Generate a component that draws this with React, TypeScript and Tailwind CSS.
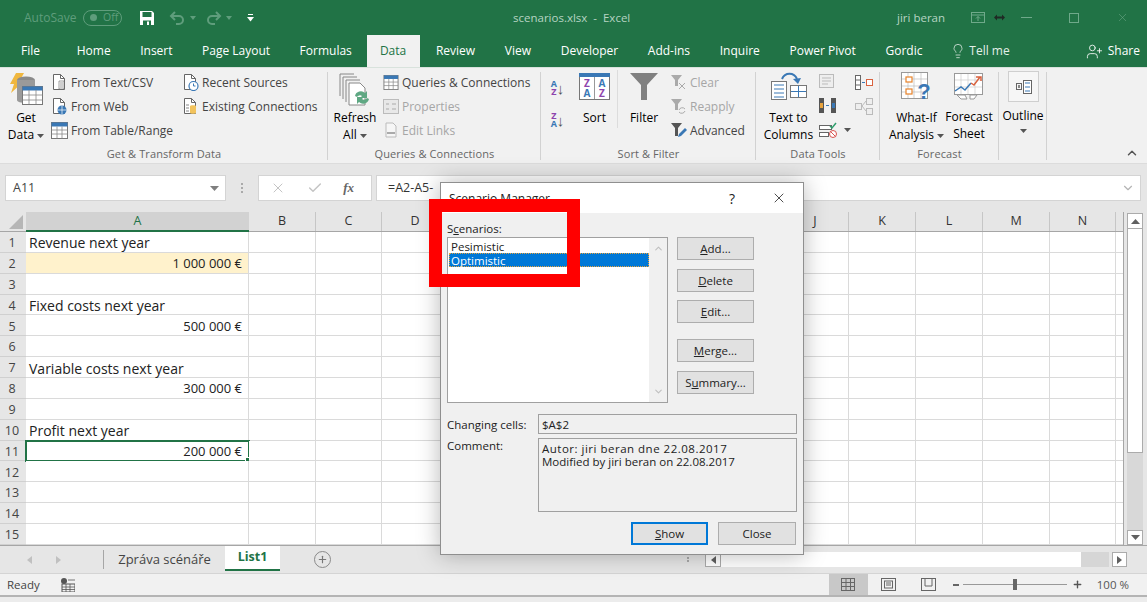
import { ReactNode } from "react";
import { Check, ChevronDown, ChevronUp, Lightbulb, Plus, UserPlus, X } from "lucide-react";

const columns = [
  { name: "A", width: 223 },
  { name: "B", width: 67 },
  { name: "C", width: 66 },
  { name: "D", width: 67 },
  { name: "E", width: 67 },
  { name: "F", width: 66 },
  { name: "G", width: 67 },
  { name: "H", width: 67 },
  { name: "I", width: 66 },
  { name: "J", width: 67 },
  { name: "K", width: 67 },
  { name: "L", width: 67 },
  { name: "M", width: 67 },
  { name: "N", width: 66 },
];

const rows: { label: string; text?: string; value?: string; fill?: boolean }[] = [
  { label: "1", text: "Revenue next year" },
  { label: "2", value: "1 000 000 €", fill: true },
  { label: "3" },
  { label: "4", text: "Fixed costs next year" },
  { label: "5", value: "500 000 €" },
  { label: "6" },
  { label: "7", text: "Variable costs next year" },
  { label: "8", value: "300 000 €" },
  { label: "9" },
  { label: "10", text: "Profit next year" },
  { label: "11", value: "200 000 €" },
  { label: "12" },
  { label: "13" },
  { label: "14" },
  { label: "15" },
];

function Caret({ className = "" }: { className?: string }) {
  return (
    <svg width="7" height="4" viewBox="0 0 7 4" className={`inline-block align-middle ${className}`}>
      <path d="M0 0h7L3.500 4z" fill="#555" />
    </svg>
  );
}

function DocIcon({ children }: { children?: ReactNode }) {
  return (
    <svg width="17" height="18" viewBox="0 0 17 18" className="shrink-0">
      <path d="M2.500 1.500h7l4 4v11h-11z" fill="#fff" stroke="#666" />
      <path d="M9.500 1.500v4h4" fill="none" stroke="#666" />
      {children}
    </svg>
  );
}

function TableIcon({ w = 17, h = 17 }: { w?: number; h?: number }) {
  return (
    <svg width={w} height={h} viewBox="0 0 17 17" className="shrink-0">
      <rect x="0.500" y="0.500" width="16" height="16" fill="#fff" stroke="#777" />
      <rect x="0.500" y="0.500" width="16" height="4" fill="#3a78b5" />
      <path d="M.5 8h16M.5 12h16M6 4.500v12M11 4.500v12" stroke="#888" strokeWidth="0.800" />
    </svg>
  );
}

function SmallRow({ icon, label, muted }: { icon: ReactNode; label: string; muted?: boolean }) {
  return (
    <div className={`flex h-6 items-center gap-[3px] whitespace-nowrap ${muted ? "text-[#a6a6a6]" : "text-[#444]"}`}>
      {icon}
      <span>{label}</span>
    </div>
  );
}

function RibbonGroup({ width, label, children }: { width: number; label: string; children: ReactNode }) {
  return (
    <div className="relative flex h-full shrink-0 flex-col" style={{ width }}>
      <div className="flex h-[77px] min-h-0 pt-[2px]">{children}</div>
      <div className="flex flex-1 items-start justify-center text-[11px] tracking-[0.1px] text-[#666]">{label}</div>
      <div className="absolute right-0 top-[4px] h-[88px] w-px bg-[#d2d2d2]" />
    </div>
  );
}

function DialogButton({ children, className = "" }: { children: ReactNode; className?: string }) {
  return (
    <div className={`flex h-[23px] w-[77px] items-center justify-center border-[1.5px] bg-[#e1e1e1] text-[11.5px] text-[#222] ${className || "border-[#adadad]"}`}>
      {children}
    </div>
  );
}

function TitleBar() {
  return (
    <div className="flex h-[35px] items-center bg-[#217346] pl-[24px] text-[11.5px]">
      <span className="w-[52px] whitespace-nowrap text-[12px] text-[#5f9d7c]">AutoSave</span>
      <div className="ml-[7px] flex h-[16px] w-[39px] items-center rounded-full border border-[#5f9d7c] pl-[6px]">
        <div className="h-[7px] w-[7px] rounded-full bg-[#5f9d7c]" />
        <span className="ml-[6px] text-[10.5px] text-[#5f9d7c]">Off</span>
      </div>
      <svg width="16" height="16" viewBox="0 0 16 16" className="ml-[17px]">
        <path d="M1 1h12l2 2v12H1z" fill="#fff" />
        <rect x="3.500" y="2" width="9" height="5" fill="#217346" />
        <rect x="4" y="10.500" width="8" height="4.500" fill="#217346" />
        <rect x="8" y="11.500" width="2" height="3.500" fill="#fff" />
      </svg>
      <svg width="16" height="14" viewBox="0 0 16 14" fill="none" stroke="#5f9d7c" strokeWidth="2" className="ml-[14px]">
        <path d="M6 1 2 5l4 4" />
        <path d="M2 5h8a4 4 0 0 1 0 8H7" />
      </svg>
      <svg width="6" height="4" viewBox="0 0 6 4" className="ml-[5px]"><path d="M0 0h6L3 4z" fill="#5f9d7c" /></svg>
      <svg width="16" height="14" viewBox="0 0 16 14" fill="none" stroke="#5f9d7c" strokeWidth="2" className="ml-[10px]">
        <path d="m10 1 4 4-4 4" />
        <path d="M14 5H6a4 4 0 0 0 0 8h3" />
      </svg>
      <svg width="6" height="4" viewBox="0 0 6 4" className="ml-[4px]"><path d="M0 0h6L3 4z" fill="#5f9d7c" /></svg>
      <svg width="7" height="8" viewBox="0 0 7 8" className="ml-[15px]">
        <path d="M1 .5h5" stroke="#fff" />
        <path d="M0 3h7L3.500 7.500z" fill="#fff" />
      </svg>
      <span className="ml-[259px] w-[384px] whitespace-nowrap text-[#b6d3c3]">scenarios.xlsx&nbsp; -&nbsp; Excel</span>
      <span className="w-[48px] whitespace-nowrap text-[#b6d3c3]">jiri beran</span>
      <svg width="14" height="11" viewBox="0 0 14 11" fill="none" stroke="#6fa98a" className="ml-[26px]">
        <rect x=".5" y=".5" width="13" height="10" />
        <path d="M.5 3h13M7 9V4.500M5 6.500l2-2 2 2" />
      </svg>
      <svg width="11" height="7" viewBox="0 0 11 7" className="ml-[9px]">
        <path d="M0 3.500 3 .5v2h5v-2l3 3-3 3v-2H3v2z" fill="#1f2a24" />
      </svg>
      <div className="ml-[16px] h-px w-[11px] bg-[#6fa98a]" />
      <div className="ml-[37px] h-[10px] w-[10px] border border-[#6fa98a]" />
      <X size={13} strokeWidth={1} className="ml-[37px] text-[#6fa98a]" />
    </div>
  );
}

function TabBar() {
  const tabs = ["Review", "View", "Developer", "Add-ins", "Inquire", "Power Pivot", "Gordic"];
  return (
    <div className="flex h-[32px] items-stretch bg-[#217346] text-[12px] text-white">
      <div className="flex items-center pl-[21px] pr-[22px]">File</div>
      {["Home", "Insert", "Page Layout", "Formulas"].map((tab) => (
        <div key={tab} className="flex items-center px-[14.75px]">{tab}</div>
      ))}
      <div className="mr-[1.5px] flex w-[53px] items-center justify-center bg-[#f1f1f1] text-[#217346]">Data</div>
      {tabs.map((tab) => (
        <div key={tab} className="flex items-center px-[14.85px]">{tab}</div>
      ))}
      <div className="ml-[13px] flex items-center gap-[3px]">
        <Lightbulb size={16} strokeWidth={1} />
        <span className="text-[#e3efe8]">Tell me</span>
      </div>
      <div className="ml-auto flex items-center gap-[5px] pr-[7px]">
        <UserPlus size={17} strokeWidth={1.2} />
        <span>Share</span>
      </div>
    </div>
  );
}

function Ribbon() {
  return (
    <div className="flex h-[96px] border-t border-[#d8e2dc] bg-[#f1f1f1] text-[12px] leading-[17px]">
      <RibbonGroup width={328} label="Get & Transform Data">
        <div className="flex w-[50px] flex-col items-center pl-[2px]">
          <svg width="36" height="36" viewBox="0 0 36 36" className="mt-[2px]">
            <path d="M8 1h8l-5 9h4L3 21l3-9H2z" fill="#f0b73f" />
            <ellipse cx="18" cy="8" rx="9" ry="3.500" fill="#8a8a8a" />
            <path d="M9 8v20c0 2 4 3 9 3V8z" fill="#9a9a9a" />
            <path d="M27 8v8H18V8z" fill="#9a9a9a" />
            <rect x="14.500" y="14.500" width="20" height="18" fill="#fff" stroke="#777" />
            <rect x="14.500" y="14.500" width="20" height="4" fill="#3a78b5" />
            <path d="M14.500 23h20M14.500 28h20M21 18v14M28 18v14" stroke="#888" strokeWidth=".8" />
          </svg>
          <div className="mt-[1px] text-center">Get</div>
          <div className="whitespace-nowrap text-center">Data <Caret /></div>
        </div>
        <div className="ml-[1px] w-[131px] text-[#444]">
          <SmallRow label="From Text/CSV" icon={<DocIcon><path d="M8 8h5v8H8zM9 10h3M9 12h3M9 14h3" fill="#fff" stroke="#777" strokeWidth=".7" /></DocIcon>} />
          <SmallRow label="From Web" icon={<DocIcon><circle cx="11" cy="13" r="4.500" fill="#3a78b5" /><path d="M6.500 13h9M11 8.500v9" stroke="#fff" strokeWidth=".7" /></DocIcon>} />
          <SmallRow label="From Table/Range" icon={<TableIcon />} />
        </div>
        <div className="text-[#444]">
          <SmallRow label="Recent Sources" icon={<DocIcon><circle cx="11.500" cy="13" r="4.500" fill="#fff" stroke="#3a78b5" strokeWidth="1.200" /><path d="M11.500 10.500V13h2" fill="none" stroke="#3a78b5" /></DocIcon>} />
          <SmallRow label="Existing Connections" icon={<DocIcon><path d="M8 9c0-1 6-1 6 0v7c0 1-6 1-6 0z" fill="#f2c35d" /><path d="M4 8h3M4 11h3M4 14h3" stroke="#888" /></DocIcon>} />
        </div>
      </RibbonGroup>
      <RibbonGroup width={213} label="Queries & Connections">
        <div className="flex w-[54px] flex-col items-center">
          <svg width="34" height="36" viewBox="0 0 34 36" className="mt-[2px]">
            <path d="M2 2h14M2 2v22M5 5h14M5 5v22M8 8h14M8 8v22" stroke="#888" fill="none" />
            <path d="M11 11h11l5 5v17H11z" fill="#fff" stroke="#888" />
            <path d="M17 24a6 6 0 0 1 10-3l2-2v7h-7l2-2a3.500 3.500 0 0 0-5 1zM31 27a6 6 0 0 1-10 3l-2 2v-7h7l-2 2a3.500 3.500 0 0 0 5-1z" fill="#5fa883" />
          </svg>
          <div className="mt-[1px]">Refresh</div>
          <div className="whitespace-nowrap">All <Caret /></div>
        </div>
        <div className="ml-[1px]">
          <SmallRow label="Queries & Connections" icon={<TableIcon w={16} h={15} />} />
          <SmallRow muted label="Properties" icon={<svg width="16" height="15" viewBox="0 0 16 15"><rect x=".5" y=".5" width="15" height="14" fill="#e8e8e8" stroke="#bbb" /><path d="M3 5h3M9 5h4M3 10h3M9 10h4" stroke="#aaa" /></svg>} />
          <SmallRow muted label="Edit Links" icon={<svg width="16" height="16" viewBox="0 0 16 16"><path d="M3 1h7l3 3v11H3z" fill="#f6f6f6" stroke="#bbb" /><path d="M4 11h8" stroke="#aaa" strokeWidth="2" /></svg>} />
        </div>
      </RibbonGroup>
      <RibbonGroup width={215} label="Sort & Filter">
        <div className="flex w-[28px] flex-col items-center gap-[6px] pl-[5px] pt-[10px] text-[9px] font-bold leading-[8px]">
          <div className="flex items-center"><div className="text-center"><div className="text-[#3a78b5]">A</div><div className="text-[#8e44ad]">Z</div></div><span className="text-[15px] font-normal text-[#555]">↓</span></div>
          <div className="mt-[10px] flex items-center"><div className="text-center"><div className="text-[#8e44ad]">Z</div><div className="text-[#3a78b5]">A</div></div><span className="text-[15px] font-normal text-[#555]">↓</span></div>
        </div>
        <div className="flex w-[48px] flex-col items-center pl-[3px]">
          <svg width="31" height="27" viewBox="0 0 31 27" className="mt-[3px]">
            <rect x=".5" y=".5" width="30" height="26" fill="#fff" stroke="#777" />
            <rect x="0" y="0" width="31" height="4" fill="#3a78b5" />
            <path d="M15.500 4v22" stroke="#999" />
            <text x="8" y="14" fontSize="10" fontWeight="700" textAnchor="middle" fill="#8e44ad">Z</text>
            <text x="8" y="24" fontSize="10" fontWeight="700" textAnchor="middle" fill="#3a78b5">A</text>
            <text x="23" y="14" fontSize="10" fontWeight="700" textAnchor="middle" fill="#3a78b5">A</text>
            <text x="23" y="24" fontSize="10" fontWeight="700" textAnchor="middle" fill="#8e44ad">Z</text>
          </svg>
          <div className="mt-[9px]">Sort</div>
        </div>
        <div className="flex h-[58px] w-[53px] flex-col items-center self-start border-l border-[#dcdcdc]">
          <svg width="30" height="29" viewBox="0 0 30 29" className="mt-[2px]">
            <path d="M1 1h28L18 13v15h-6V13z" fill="#808080" />
          </svg>
          <div className="mt-[8px]">Filter</div>
        </div>
        <div>
          <SmallRow muted label="Clear" icon={<svg width="17" height="17" viewBox="0 0 17 17"><path d="M1 1h11L8 6v6H5V6z" fill="#aaa" /><path d="m9 9 6 6m0-6-6 6" stroke="#aaa" /></svg>} />
          <SmallRow muted label="Reapply" icon={<svg width="17" height="17" viewBox="0 0 17 17"><path d="M1 1h11L8 6v6H5V6z" fill="#aaa" /><path d="M9 12a3.500 3.500 0 0 1 6-1m0 2a3.500 3.500 0 0 1-6 1" fill="none" stroke="#aaa" /></svg>} />
          <SmallRow label="Advanced" icon={<svg width="17" height="17" viewBox="0 0 17 17"><path d="M1 1h11L8 6v8H5V6z" fill="#555" /><path d="m8 15 1-3 6-6 2 2-6 6z" fill="#3a78b5" /></svg>} />
        </div>
      </RibbonGroup>
      <RibbonGroup width={124} label="Data Tools">
        <div className="flex w-[62px] flex-col items-center pl-[3px]">
          <svg width="36" height="29" viewBox="0 0 36 29" className="mt-[2px]">
            <rect x=".5" y="9.500" width="15" height="18" fill="#fff" stroke="#777" />
            <path d="M3 13h10M3 17h10M3 21h10M3 25h10" stroke="#3a78b5" />
            <rect x="19.500" y="13.500" width="16" height="12" fill="#fff" stroke="#777" />
            <path d="M20 19.500h15M27.500 14v11" stroke="#3a78b5" />
            <path d="M11 7c3-7 12-7 15 0" fill="none" stroke="#3a78b5" strokeWidth="2" />
            <path d="m22 7 8-1-3 6z" fill="#3a78b5" />
          </svg>
          <div className="mt-[8px] text-center">Text to</div>
          <div className="text-center">Columns</div>
        </div>
        <div className="flex w-[37px] flex-col items-start pl-[1px]">
          <div className="flex h-6 items-center"><svg width="17" height="16" viewBox="0 0 17 16"><rect x=".5" y=".5" width="14" height="13" fill="#eee" stroke="#bbb" /><path d="M3 4h9M3 7h9M3 10h6" stroke="#bbb" /></svg></div>
          <div className="flex h-6 items-center"><svg width="17" height="16" viewBox="0 0 17 16"><rect x="0" y="0" width="5" height="15" fill="#555" /><rect x="1" y="5" width="3" height="5" fill="#e8a33d" /><rect x="12" y="0" width="5" height="15" fill="#555" /><rect x="13" y="5" width="3" height="5" fill="#3a78b5" /><path d="M7 7.500h3" stroke="#3a78b5" /></svg></div>
          <div className="flex h-6 items-center gap-[6px]">
            <svg width="19" height="17" viewBox="0 0 19 17"><rect x=".5" y="3.500" width="12" height="4" fill="#fff" stroke="#666" /><rect x=".5" y="10.500" width="9" height="4" fill="#fff" stroke="#666" /><path d="m11 4 2 2 4-5" fill="none" stroke="#2e9d6c" strokeWidth="1.500" /><circle cx="14" cy="12" r="3.500" fill="#fff" stroke="#d9534f" /><path d="m11.500 9.500 5 5" stroke="#d9534f" /></svg>
            <Caret />
          </div>
        </div>
        <div className="flex flex-col items-center">
          <div className="flex h-6 items-center"><svg width="18" height="15" viewBox="0 0 18 15"><rect x=".5" y=".5" width="5" height="14" fill="#fff" stroke="#666" /><path d="M1 5h4M1 10h4" stroke="#666" /><path d="M7 7.500h3" stroke="#3a78b5" /><rect x="11.500" y="4.500" width="6" height="6" fill="#fff" stroke="#d9623f" /></svg></div>
          <div className="flex h-6 items-center"><svg width="18" height="17" viewBox="0 0 18 17" fill="#eee" stroke="#bbb"><rect x="11.500" y=".5" width="6" height="6" /><rect x="11.500" y="10.500" width="6" height="6" /><rect x=".5" y="5.500" width="6" height="6" /><path d="m7 8 4-5m-4 5 4 5" fill="none" /></svg></div>
        </div>
      </RibbonGroup>
      <RibbonGroup width={119} label="Forecast">
        <div className="flex w-[66px] flex-col items-center pl-[7px]">
          <svg width="31" height="28" viewBox="0 0 31 28" className="mt-[2px]">
            <rect x=".5" y=".5" width="26" height="26" fill="#fff" stroke="#999" />
            <path d="M7 1v25M13 1v25M20 1v25M1 7h25M1 14h25M1 20h25" stroke="#bbb" strokeWidth=".7" />
            <rect x="5" y="5" width="6" height="5" fill="#fff" stroke="#e8832a" strokeWidth="1.200" />
            <rect x="5" y="17" width="6" height="5" fill="#fff" stroke="#e8832a" strokeWidth="1.200" />
            <text x="23" y="27" fontSize="22" fontWeight="700" textAnchor="middle" fill="#3a78b5" fontFamily="Liberation Sans">?</text>
          </svg>
          <div className="mt-[9px] text-center">What-If</div>
          <div className="whitespace-nowrap text-center">Analysis <Caret /></div>
        </div>
        <div className="flex w-[46px] flex-col items-center">
          <svg width="30" height="27" viewBox="0 0 30 27" className="mt-[3px]">
            <rect x=".5" y=".5" width="28" height="21" fill="#fff" stroke="#999" />
            <path d="M7 1v20M14 1v20M21 1v20M1 7h27M1 14h27" stroke="#ccc" strokeWidth=".7" />
            <path d="m1 18 6-4 4 3 6-7" fill="none" stroke="#3a78b5" strokeWidth="1.500" />
            <path d="m17 10 3 2 6-8M22 4h5v4" fill="none" stroke="#d9623f" strokeWidth="1.500" />
            <path d="M3 22h8l2 4H7zM16 22h7l-3 4h-4z" fill="#fff" stroke="#999" />
          </svg>
          <div className="mt-[8px] text-center">Forecast</div>
          <div className="text-center">Sheet</div>
        </div>
      </RibbonGroup>
      <RibbonGroup width={48} label="">
        <div className="flex w-full flex-col items-center">
          <div className="mt-[1px] flex h-[31px] w-[31px] items-center justify-center border border-[#cfcfcf] bg-[#f6f6f6]">
            <svg width="17" height="14" viewBox="0 0 17 14"><rect x="1.500" y="3.500" width="5" height="6" fill="none" stroke="#666" /><rect x="3" y="5" width="2" height="3" fill="#888" /><rect x="8.500" y=".5" width="8" height="13" fill="#fff" stroke="#666" /><path d="M10 3h5M10 7h5M10 11h5" stroke="#3a78b5" /></svg>
          </div>
          <div className="mt-[5px]">Outline</div>
          <Caret className="mt-[5px]" />
        </div>
      </RibbonGroup>
      <div className="flex flex-1 items-end justify-end pb-[3px] pr-[8px]">
        <ChevronUp size={14} strokeWidth={2.5} className="text-[#555]" />
      </div>
    </div>
  );
}

function FormulaBar() {
  return (
    <div className="flex h-[49px] items-start border-t border-[#dcdcdc] bg-[#e6e6e6] pl-[5px] pr-[6px] pt-[11px] text-[12.5px]">
      <div className="flex h-[26px] w-[221px] items-center justify-between border border-[#d4d4d4] bg-white pl-[7px] pr-[6px] text-[#444]">
        A11
        <svg width="9" height="5" viewBox="0 0 9 5"><path d="M0 0h9L4.500 5z" fill="#7f7f7f" /></svg>
      </div>
      <div className="flex h-[26px] w-[32px] flex-col items-center justify-center gap-[2px]">
        <div className="h-[2px] w-[2px] bg-[#aaa]" />
        <div className="h-[2px] w-[2px] bg-[#aaa]" />
        <div className="h-[2px] w-[2px] bg-[#aaa]" />
      </div>
      <div className="flex h-[26px] w-[114px] items-center justify-between border border-[#d4d4d4] bg-white pl-[11px] pr-[17px]">
        <X size={16} strokeWidth={1.5} className="text-[#c4c4c4]" />
        <Check size={16} strokeWidth={2.2} className="text-[#c4c4c4]" />
        <span className="font-['Liberation_Serif'] text-[13px] font-semibold italic text-[#666]">fx</span>
      </div>
      <div className="ml-[4px] flex h-[26px] flex-1 items-center justify-between border border-[#d4d4d4] bg-white pl-[11px] pr-[5px] text-[#333]">
        =A2-A5-
        <ChevronDown size={14} strokeWidth={2} className="text-[#b4b4b4]" />
      </div>
    </div>
  );
}

function Sheet() {
  return (
    <div className="flex h-[333px] bg-[#e6e6e6]">
      <div className="w-[1124px] border-r border-[#a6a6a6]">
        <div className="flex h-[20px] border-b border-[#a6a6a6]">
          <div className="relative w-[26px] shrink-0">
            <svg width="14" height="14" viewBox="0 0 14 14" className="absolute bottom-[2px] right-[3px]"><path d="M14 0v14H0z" fill="#b6b6b6" /></svg>
          </div>
          {columns.map((col) => (
            <div
              key={col.name}
              style={{ width: col.width }}
              className={`flex shrink-0 items-center justify-center text-[12.5px] ${
                col.name === "A"
                  ? "h-[20px] border-b-2 border-[#217346] bg-[#d2d2d2] text-[#217346]"
                  : "border-r border-[#c6c6c6] text-[#333]"
              }`}
            >
              {col.name}
            </div>
          ))}
          <div className="flex-1" />
        </div>
        {rows.map((row) => (
          <div key={row.label} className="flex h-[20.866px]">
            <div className="flex w-[26px] shrink-0 items-center justify-center border-b border-[#d0d0d0] pr-[2px] pt-[3px] text-[12.5px] text-[#444]">
              {row.label}
            </div>
            {columns.map((col) => (
              <div
                key={col.name}
                style={{ width: col.width }}
                className={`relative flex shrink-0 items-center justify-end whitespace-nowrap border-b border-r border-[#dadada] pr-[6px] pt-[2px] text-[13px] text-[#222] ${
                  col.name === "A" && row.fill ? "bg-[#fff2cc]" : "bg-white"
                } ${col.name === "A" && row.label === "11" ? "outline-2 -outline-offset-1 outline-[#217346]" : ""}`}
              >
                {col.name === "A" && row.text && <span className="mr-auto pl-[3px] text-[14px]">{row.text}</span>}
                {col.name === "A" && row.value}
                {col.name === "A" && row.label === "11" && (
                  <div className="absolute bottom-[-3px] right-[-3px] h-[6px] w-[6px] border border-white bg-[#217346]" />
                )}
              </div>
            ))}
            <div className="flex-1 border-b border-[#dadada] bg-white" />
          </div>
        ))}
      </div>
      <div className="ml-[3px] mt-[1px] flex w-[16px] flex-col items-center">
        <div className="flex h-[16px] w-[16px] shrink-0 items-center justify-center border border-[#ababab] bg-white">
          <svg width="9" height="5" viewBox="0 0 9 5"><path d="M0 5h9L4.500 0z" fill="#606060" /></svg>
        </div>
        <div className="h-[224px] w-[16px] shrink-0 border border-t-0 border-[#ababab] bg-white" />
        <div className="w-[16px] flex-1 bg-[#d8d8d8]" />
        <div className="flex h-[15px] w-[16px] shrink-0 items-center justify-center border border-[#ababab] bg-white">
          <svg width="9" height="5" viewBox="0 0 9 5"><path d="M0 0h9L4.500 5z" fill="#606060" /></svg>
        </div>
      </div>
    </div>
  );
}

function SheetTabs() {
  return (
    <div className="flex h-[28px] items-stretch border-t border-[#a6a6a6] bg-[#e6e6e6] text-[12.5px]">
      <div className="my-[4px] flex w-[104px] items-center gap-[24px] border-r border-[#a6a6a6] pl-[27px]">
        <svg width="5" height="8" viewBox="0 0 5 8"><path d="M5 0v8L0 4z" fill="#c0c0c0" /></svg>
        <svg width="5" height="8" viewBox="0 0 5 8"><path d="M0 0v8l5-4z" fill="#c0c0c0" /></svg>
      </div>
      <div className="flex w-[121px] items-center justify-center text-[13px] text-[#444]">Zpráva scénáře</div>
      <div className="mb-[2px] flex w-[55px] items-center justify-center border-b-2 border-[#217346] bg-white font-bold text-[#217346]">List1</div>
      <div className="ml-[34px] flex items-center">
        <div className="flex h-[17px] w-[17px] items-center justify-center rounded-full border-[1.5px] border-[#8a8a8a]">
          <Plus size={11} strokeWidth={2.5} className="text-[#777]" />
        </div>
      </div>
      <div className="ml-[356px] flex w-[2px] flex-col justify-center gap-[1px]">
        <div className="h-[2px] w-[2px] bg-[#aaa]" />
        <div className="h-[2px] w-[2px] bg-[#aaa]" />
      </div>
      <div className="ml-[16px] mt-[6px] flex h-[15px] w-[16px] items-center justify-center border border-[#ababab] bg-white">
        <svg width="5" height="8" viewBox="0 0 5 8"><path d="M5 0v8L0 4z" fill="#606060" /></svg>
      </div>
      <div className="mt-[6px] h-[15px] w-[360px] bg-white" />
      <div className="mt-[6px] h-[15px] w-[28px] bg-[#d6d6d6]" />
      <div className="ml-[3px] mt-[6px] flex h-[15px] w-[15px] items-center justify-center border border-[#ababab] bg-white">
        <svg width="5" height="8" viewBox="0 0 5 8"><path d="M0 0v8l5-4z" fill="#606060" /></svg>
      </div>
    </div>
  );
}

function StatusBar() {
  return (
    <div className="flex h-[24px] items-center border-b-2 border-t border-[#d4d4d4] border-b-[#b4b4b4] bg-[#f1f1f1] pl-[7px] text-[11.5px] text-[#444]">
      <span>Ready</span>
      <svg width="14" height="14" viewBox="0 0 14 14" className="ml-[21px]">
        <circle cx="3" cy="3" r="3" fill="#555" />
        <rect x="1" y="6" width="13" height="8" fill="none" stroke="#555" />
        <path d="M7 2h7M1 9h13M1 11.500h13M5 6v8M9 6v8" stroke="#555" strokeWidth=".8" />
      </svg>
      <div className="ml-[754px] flex h-full w-[39px] items-center justify-center bg-[#c8c8c8]">
        <svg width="14" height="13" viewBox="0 0 14 13" fill="none" stroke="#666"><rect x=".5" y=".5" width="13" height="12" /><path d="M5 0v13M9.500 0v13M0 4.500h14M0 8.500h14" /></svg>
      </div>
      <svg width="15" height="13" viewBox="0 0 15 13" fill="none" stroke="#666" className="ml-[13px]"><rect x=".5" y=".5" width="14" height="12" /><rect x="3.500" y="3" width="8" height="7" /><path d="M5 5h5M5 7h5" /></svg>
      <svg width="15" height="13" viewBox="0 0 15 13" fill="none" stroke="#666" className="ml-[25px]"><rect x=".5" y=".5" width="14" height="12" /><path d="M4 0v8h7V0" /></svg>
      <div className="ml-[17px] h-[2px] w-[6px] bg-[#666]" />
      <div className="relative ml-[4px] h-px w-[104px] bg-[#999]">
        <div className="absolute left-[50px] top-[-5px] h-[11px] w-[4px] bg-[#666]" />
      </div>
      <Plus size={11} strokeWidth={3} className="ml-[5px] text-[#555]" />
      <span className="ml-[14px] whitespace-nowrap text-[#555]">100 %</span>
    </div>
  );
}

function ScenarioDialog() {
  return (
    <div className="absolute left-[440px] top-[182px] h-[373px] w-[364px] border border-[#8f8f8f] bg-[#f0f0f0] text-[11.5px] leading-[13px] text-[#222] shadow-[0_0_22px_rgba(0,0,0,0.28)]">
      <div className="flex h-[30px] items-center justify-between bg-white pl-[8px] pr-[16px] text-[12px]">
        <span>Scenario Manager</span>
        <div className="flex items-center gap-[36px]">
          <span className="text-[14px]">?</span>
          <X size={16} strokeWidth={1.2} />
        </div>
      </div>
      <div className="flex px-[6px] pt-[9px]">
        <div className="w-[221px]">
          <div className="h-[15px]">S<u>c</u>enarios:</div>
          <div className="flex h-[166px] border-[1.5px] border-[#a0a0a0] bg-white">
            <div className="flex-1 pl-[1px] pt-[2px]">
              <div className="flex h-[13px] items-center pl-[2px]">Pesimistic</div>
              <div className="flex h-[14px] items-center border border-dotted border-[#e8a33d] bg-[#0078d7] pl-[1px] text-white">Optimistic</div>
            </div>
            <div className="flex w-[18px] flex-col items-center justify-between bg-[#f0f0f0] py-[5px]">
              <ChevronUp size={11} strokeWidth={2.5} className="text-[#c0c0c0]" />
              <ChevronDown size={11} strokeWidth={2.5} className="text-[#c0c0c0]" />
            </div>
          </div>
        </div>
        <div className="ml-[9px] flex flex-col">
          <div className="h-[15px]" />
          <DialogButton><u>A</u>dd...</DialogButton>
          <DialogButton className="mt-[9px] border-[#adadad]"><u>D</u>elete</DialogButton>
          <DialogButton className="mt-[8px] border-[#adadad]"><u>E</u>dit...</DialogButton>
          <DialogButton className="mt-[16px] border-[#adadad]"><u>M</u>erge...</DialogButton>
          <DialogButton className="mt-[9px] border-[#adadad]">S<u>u</u>mmary...</DialogButton>
        </div>
      </div>
      <div className="mt-[11px] flex items-center px-[6px]">
        <span className="w-[91px]">Changing cells:</span>
        <div className="flex h-[20px] w-[259px] items-center border-[1.5px] border-[#a0a0a0] pl-[3px]">$A$2</div>
      </div>
      <div className="mt-[4px] flex px-[6px]">
        <span className="w-[91px] pt-[1px]">Comment:</span>
        <div className="h-[74px] w-[259px] border-[1.5px] border-[#a0a0a0] pl-[3px] pt-[3px]">
          <div className="tracking-[0.5px]">Autor: jiri beran dne 22.08.2017</div>
          <div>Modified by jiri beran on 22.08.2017</div>
        </div>
      </div>
      <div className="mr-[7px] mt-[10px] flex justify-end gap-[10px]">
        <DialogButton className="border-[2px] border-[#0078d7]"><u>S</u>how</DialogButton>
        <DialogButton className="w-[78px] border-[#adadad]">Close</DialogButton>
      </div>
    </div>
  );
}

export default function App() {
  return (
    <div className="relative h-[602px] w-[1147px] overflow-hidden bg-[#ececec] font-['Open_Sans',sans-serif]">
      <TitleBar />
      <TabBar />
      <Ribbon />
      <FormulaBar />
      <Sheet />
      <SheetTabs />
      <StatusBar />
      <ScenarioDialog />
      <div className="absolute left-[429px] top-[199px] h-[88px] w-[151px] border-[13px] border-[#ff0000]" />
    </div>
  );
}
